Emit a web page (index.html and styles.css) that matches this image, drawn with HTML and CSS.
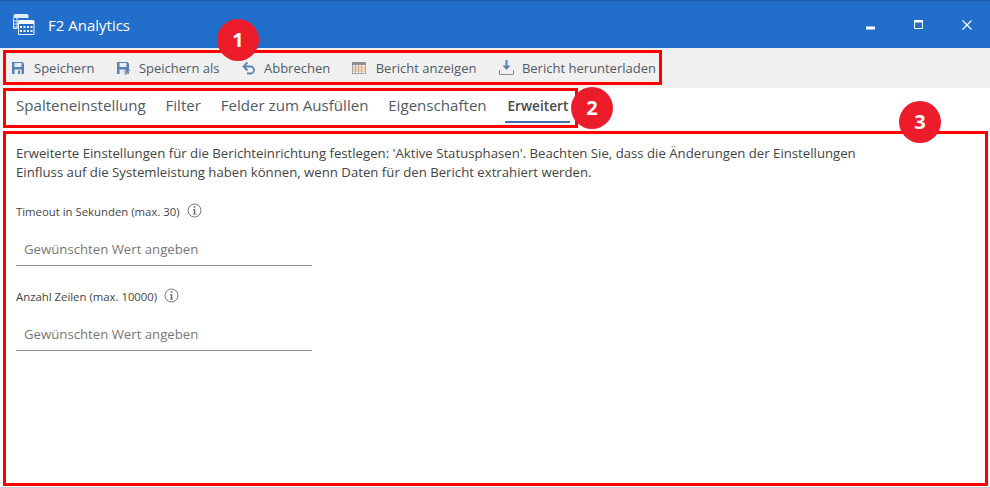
FILE: index.html
```html
<!DOCTYPE html>
<html lang="de">
<head>
<meta charset="utf-8">
<title>F2 Analytics</title>
<link rel="stylesheet" href="styles.css">
</head>
<body>
<div class="window">
  <header class="titlebar">
    <svg class="app-icon" width="26" height="26" viewBox="0 0 26 26">
      <path d="M1.500 5.500v10h4" fill="none" stroke="#dfe9f7"/>
      <path d="M3 1h12a1.500 1.500 0 0 1 1.500 1.500V5H1.500V2.500A1.500 1.500 0 0 1 3 1z" fill="#dfe9f7"/>
      <path d="M1.500 8h5M1.500 11h5M1.500 14h5M5 5v10" stroke="#dfe9f7" fill="none"/>
      <rect x="6" y="7" width="16.500" height="15" rx="1" fill="#216ecb"/>
      <path d="M7.500 7h13.500a1.500 1.500 0 0 1 1.500 1.500V11H6V8.500A1.500 1.500 0 0 1 7.500 7z" fill="#f4f8fd"/>
      <path d="M6.500 11v10.500h15.500V11" fill="none" stroke="#f4f8fd"/>
      <path d="M8 13h2v2H8zM11.500 13h2v2h-2zM15 13h2v2h-2zM18.500 13h2v2h-2zM8 17h2v2H8zM11.500 17h2v2h-2zM15 17h2v2h-2zM18.500 17h2v2h-2z" fill="#f4f8fd"/>
    </svg>
    <span class="app-name">F2 Analytics</span>
    <div class="window-controls">
      <svg width="10" height="10" viewBox="0 0 10 10"><rect x="0" y="6.500" width="9" height="3" fill="#fff"/></svg>
      <svg width="10" height="10" viewBox="0 0 10 10"><path d="M.5.5h8v8h-8z" fill="none" stroke="#fff"/><rect x="0" y="0" width="9" height="2.500" fill="#fff"/></svg>
      <svg width="10" height="10" viewBox="0 0 10 10"><path d="M.5.500l9 9M9.500.500l-9 9" stroke="#fff" stroke-width="1.200" fill="none"/></svg>
    </div>
  </header>

  <nav class="toolbar">
    <button class="tool">
      <svg width="16" height="16" viewBox="0 0 16 16"><path d="M2 2h10.500L14 3.500V14H2z" fill="#5b81b3"/><rect x="4.500" y="3" width="7" height="4" fill="#e8edf4"/><rect x="4.500" y="9.500" width="7" height="4.500" fill="#e8edf4"/><rect x="8" y="10.500" width="2" height="3.500" fill="#5b81b3"/></svg>
      <span>Speichern</span>
    </button>
    <button class="tool">
      <svg width="16" height="16" viewBox="0 0 16 16"><path d="M2 2h10.500L14 3.500V14H2z" fill="#5b81b3"/><rect x="4.500" y="3" width="7" height="4" fill="#e8edf4"/><rect x="4.500" y="9.500" width="6" height="4.500" fill="#e8edf4"/><path d="M10 15l5-5" stroke="#a7a0b5" stroke-width="1.300"/><path d="M9 11l2 3" stroke="#7f93b3"/></svg>
      <span>Speichern als</span>
    </button>
    <button class="tool">
      <svg width="16" height="16" viewBox="0 0 16 16"><path d="M5 6.500h5.500a3 3 0 0 1 0 7H7" fill="none" stroke="#5b81b3" stroke-width="1.800"/><path d="M7.500 2.500L3.500 6.500 7.500 10.500" fill="none" stroke="#5b81b3" stroke-width="1.800"/></svg>
      <span>Abbrechen</span>
    </button>
    <button class="tool tool-report">
      <svg width="16" height="16" viewBox="0 0 16 16"><rect x="0.500" y="2.500" width="13" height="11" fill="#f6f3ef" stroke="#a5a5a5"/><rect x="0" y="2" width="14" height="3" fill="#8f8f8f"/><path d="M1 7h12M1 9h12M1 11h12" stroke="#f0b078"/><path d="M3.500 5v8M6.500 5v8M9.500 5v8" stroke="#b5b5b5"/></svg>
      <span>Bericht anzeigen</span>
    </button>
    <button class="tool tool-report">
      <svg width="16" height="16" viewBox="0 0 16 16"><path d="M8.500 0v8" stroke="#5b81b3" stroke-width="2" fill="none"/><path d="M4.500 5.500h8L8.500 10z" fill="#5b81b3"/><path d="M1.500 10v4.500h14V10" stroke="#8d8d8d" fill="none"/></svg>
      <span>Bericht herunterladen</span>
    </button>
  </nav>

  <nav class="tabs">
    <a class="tab">Spalteneinstellung</a>
    <a class="tab">Filter</a>
    <a class="tab">Felder zum Ausfüllen</a>
    <a class="tab">Eigenschaften</a>
    <a class="tab active">Erweitert</a>
  </nav>

  <main class="content">
    <p class="intro">Erweiterte Einstellungen für die Berichteinrichtung festlegen: 'Aktive Statusphasen'. Beachten Sie, dass die Änderungen der Einstellungen<br>Einfluss auf die Systemleistung haben können, wenn Daten für den Bericht extrahiert werden.</p>

    <div class="field">
      <label class="field-label">Timeout in Sekunden (max. 30)
        <svg class="info" width="15" height="15" viewBox="0 0 15 15"><circle cx="7.500" cy="7.500" r="6.500" fill="none" stroke="#777"/><path d="M6.700 3.300h1.600v1.500H6.700zM6 6.300h2.300v4.400H9.300v.9H5.800v-.9h1v-3.500H6z" fill="#666"/></svg>
      </label>
      <div class="input">Gewünschten Wert angeben</div>
    </div>

    <div class="field">
      <label class="field-label">Anzahl Zeilen (max. 10000)
        <svg class="info" width="15" height="15" viewBox="0 0 15 15"><circle cx="7.500" cy="7.500" r="6.500" fill="none" stroke="#777"/><path d="M6.700 3.300h1.600v1.500H6.700zM6 6.300h2.300v4.400H9.300v.9H5.800v-.9h1v-3.500H6z" fill="#666"/></svg>
      </label>
      <div class="input">Gewünschten Wert angeben</div>
    </div>
  </main>

  <div class="mark mark-toolbar"></div>
  <div class="mark mark-tabs"></div>
  <div class="mark mark-content"></div>
  <div class="badge badge-1">1</div>
  <div class="badge badge-2">2</div>
  <div class="badge badge-3">3</div>
</div>
</body>
</html>
```

FILE: styles.css
```css
* { box-sizing: border-box; }
html, body { margin: 0; padding: 0; }
body {
  width: 990px;
  height: 488px;
  overflow: hidden;
  background: #fff;
  font-family: "Open Sans", "Noto Sans", sans-serif;
  color: #3f3f3f;
}
.window {
  position: relative;
  width: 990px;
  height: 488px;
  border-bottom: 1px solid #c8c8c8;
  display: flex;
  flex-direction: column;
}
.titlebar {
  height: 48px;
  flex: none;
  background: #216ecb;
  border-top: 1px solid #1e5fae;
  display: flex;
  align-items: center;
  padding-left: 12px;
  color: #fff;
}
.app-icon { flex: none; margin-top: 2px; }
.app-name {
  margin-left: 10px;
  margin-top: 1px;
  font-size: 15px;
}
.window-controls {
  margin-left: auto;
  display: flex;
  gap: 38px;
  padding-right: 18px;
  align-items: center;
}
.toolbar {
  height: 40px;
  flex: none;
  background: #f0f0f0;
  display: flex;
  align-items: center;
  padding-left: 10px;
  gap: 20.5px;
}
.tool {
  display: flex;
  align-items: center;
  gap: 8px;
  padding: 0;
  border: 0;
  background: none;
  font: inherit;
  font-size: 13px;
  color: #505a66;
}
.tool-report { margin-left: 1px; }
.tabs {
  height: 40px;
  flex: none;
  display: flex;
  padding-left: 16px;
  gap: 19.75px;
}
.tab {
  height: 35px;
  font-size: 15.1px;
  line-height: 35px;
  color: #505a66;
}
.tab.active {
  font-weight: 600;
  font-size: 13.7px;
  color: #4a4a4a;
  border-bottom: 2px solid #3c6fbb;
  margin-left: -1px;
  padding: 0 2px;
}
.content {
  flex: 1;
  padding: 16px 16px 0;
}
.intro {
  margin: 0 0 19px;
  font-size: 13.2px;
  line-height: 19px;
  color: #444;
}
.field { width: 296px; margin-bottom: 20px; }
.field-label {
  display: flex;
  align-items: center;
  gap: 7px;
  height: 20px;
  font-size: 11.35px;
  color: #444;
}
.info { flex: none; margin-top: -2px; }
.input {
  height: 45px;
  padding: 18px 8px 0;
  font-size: 13.2px;
  line-height: 20px;
  color: #777;
  border-bottom: 1px solid #8c8c8c;
}
.mark {
  position: absolute;
  border: 3px solid #f00;
  pointer-events: none;
}
.mark-toolbar { left: 3px; top: 50px; width: 659px; height: 35px; }
.mark-tabs { left: 3px; top: 88px; width: 575px; height: 40px; }
.mark-content { left: 3px; top: 131px; width: 985px; height: 355px; }
.badge {
  position: absolute;
  width: 42px;
  height: 42px;
  border-radius: 50%;
  background: #ed1c2b;
  color: #fff;
  font-weight: 700;
  font-size: 20px;
  line-height: 42px;
  text-align: center;
}
.badge-1 { left: 217px; top: 19px; }
.badge-2 { left: 571px; top: 87px; }
.badge-3 { left: 899px; top: 101px; }
```
